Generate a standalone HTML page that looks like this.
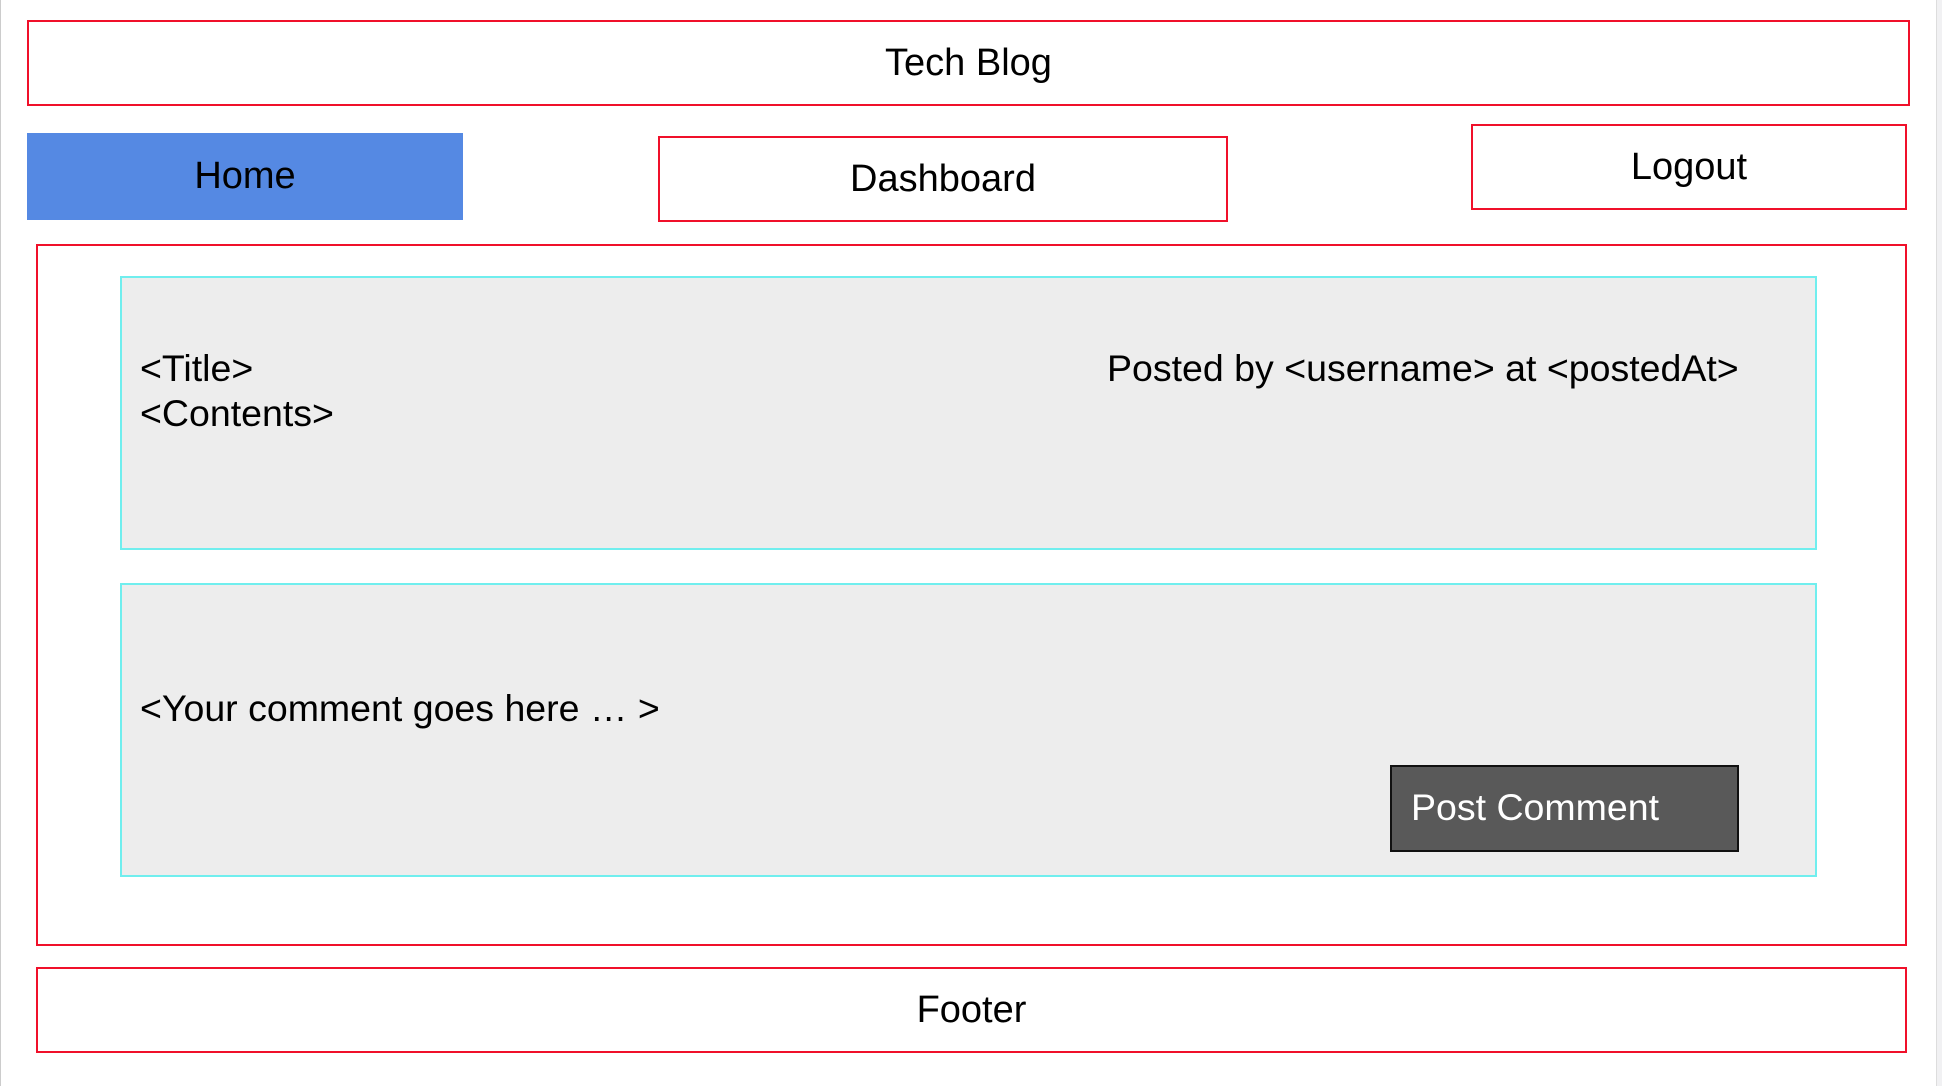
<!DOCTYPE html>
<html><head><meta charset="utf-8"><style>
html,body{margin:0;padding:0;width:1942px;height:1086px;background:#fff;overflow:hidden;font-family:"Liberation Sans",Arial,sans-serif;color:#000}
.a{position:absolute;box-sizing:border-box}
.r{border:2px solid #f0102a}
.c{display:flex;align-items:center;justify-content:center;font-size:38px}
.g{background:#ededed;border:2px solid #70eeee}
.t{position:absolute;font-size:37.5px;line-height:36px;white-space:nowrap}
</style></head><body>
<div class="a" style="left:0;top:0;width:1px;height:1086px;background:#ccc"></div>
<div class="a" style="left:1936px;top:0;width:6px;height:1086px;background:#f1f1f3;border-left:1px solid #ddd"></div>
<div class="a r c" style="left:27px;top:20px;width:1883px;height:86px">Tech Blog</div>
<div class="a c" style="left:27px;top:133px;width:436px;height:87px;background:#5589e3">Home</div>
<div class="a r c" style="left:658px;top:136px;width:570px;height:86px">Dashboard</div>
<div class="a r c" style="left:1471px;top:124px;width:436px;height:86px">Logout</div>
<div class="a r" style="left:36px;top:244px;width:1871px;height:702px"></div>
<div class="a g" style="left:120px;top:276px;width:1697px;height:274px"></div>
<div class="t" style="left:140px;top:350px">&lt;Title&gt;</div>
<div class="t" style="left:140px;top:395px">&lt;Contents&gt;</div>
<div class="t" style="left:1107px;top:350px">Posted by &lt;username&gt; at &lt;postedAt&gt;</div>
<div class="a g" style="left:120px;top:583px;width:1697px;height:294px"></div>
<div class="t" style="left:140px;top:690px">&lt;Your comment goes here … &gt;</div>
<div class="a" style="left:1390px;top:765px;width:349px;height:87px;background:#595959;border:2px solid #111"></div>
<div class="t" style="left:1411px;top:789px;color:#fff">Post Comment</div>
<div class="a r c" style="left:36px;top:967px;width:1871px;height:86px">Footer</div>
</body></html>
